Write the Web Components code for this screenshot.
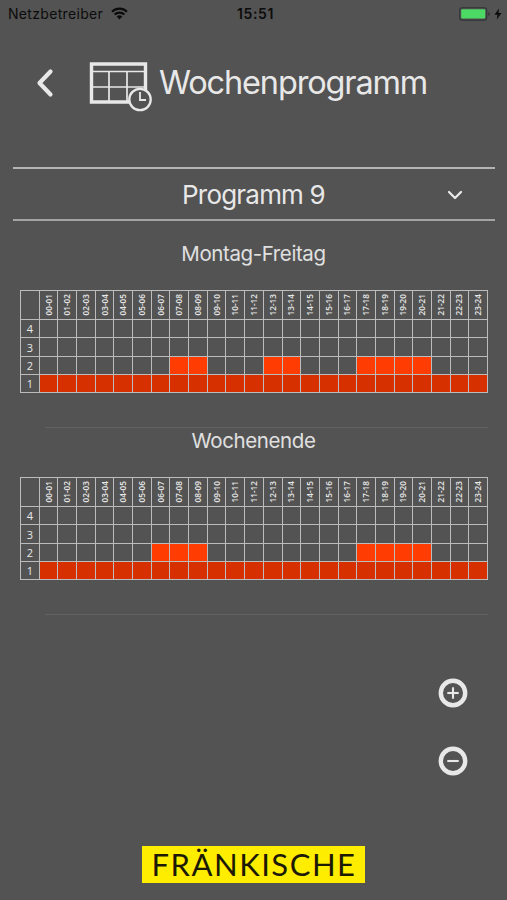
<!DOCTYPE html>
<html lang="de">
<head>
<meta charset="utf-8">
<title>Wochenprogramm</title>
<style>
  body {
    background: #535353;
    color: #e8e8e8;
    font-family: Inter, "Liberation Sans", sans-serif;
    margin: 0;
  }
</style>
</head>
<body>
<week-app></week-app>

<script>
const define = (name, html, setup) => {
  const template = document.createElement('template')
  template.innerHTML = html

  customElements.define(name, class extends HTMLElement {
    constructor() {
      super()
      this.attachShadow({ mode: 'open' }).appendChild(template.content.cloneNode(true))
    }

    connectedCallback() {
      if (setup) setup(this, this.shadowRoot)
    }
  })
}

define('status-bar', `
  <style>
    :host {
      align-items: center;
      box-sizing: border-box;
      color: #0c0c0c;
      display: grid;
      font-size: 14px;
      grid-template-columns: 1fr auto 1fr;
      height: 28px;
      padding: 0 5px 0 8px;
    }

    div {
      align-items: center;
      display: flex;
      margin-top: -1px;
    }

    .carrier {
      gap: 8px;
      letter-spacing: .32px;
    }

    .time {
      font-weight: 600;
      letter-spacing: .6px;
      padding-left: 1px;
    }

    .power {
      gap: 3px;
      justify-content: flex-end;
    }

    svg {
      display: block;
    }
  </style>

  <div class="carrier">
    <span><slot name="carrier"></slot></span>
    <svg width="17" height="13" viewBox="0 0 17 13" fill="none" stroke="#0c0c0c" stroke-width="2.1">
      <path d="M1 4.7a10.7 10.7 0 0 1 15 0M3.6 7.6a7 7 0 0 1 9.8 0" />
      <path d="M8.5 12.5 5.7 9.6a4 4 0 0 1 5.6 0z" fill="#0c0c0c" stroke="none" />
    </svg>
  </div>
  <div class="time"><slot name="time"></slot></div>
  <div class="power">
    <svg width="32" height="14" viewBox="0 0 32 14">
      <rect x=".7" y=".7" width="27" height="12.4" rx="2.4" fill="none" stroke="#303536" stroke-width="1.1" />
      <rect x="2.2" y="2.2" width="24" height="9.4" rx="1" fill="#4cd964" />
      <path d="M29.3 5v4q1.5-.5 1.5-2t-1.5-2" fill="#303536" />
    </svg>
    <svg width="8" height="12" viewBox="0 0 8 12"><path d="M5 .5.5 6.8h3L2.8 11.5 7.5 5h-3z" fill="#0c0c0c" /></svg>
  </div>
`)

define('page-header', `
  <style>
    :host {
      align-items: center;
      display: flex;
      height: 139px;
    }

    .back {
      margin: -29px 0 0 35px;
    }

    .calendar {
      margin: -22px 0 0 34px;
    }

    h1 {
      font-size: 32.5px;
      font-weight: 400;
      letter-spacing: -1.15px;
      line-height: 40px;
      margin: -29px 0 0 6px;
      white-space: nowrap;
    }
  </style>

  <svg class="back" width="20" height="30" viewBox="0 0 20 30">
    <path d="M15.5 3.5 4.5 15l11 11.5" fill="none" stroke="#e8e8e8" stroke-width="4.2" stroke-linecap="round" stroke-linejoin="round" />
  </svg>
  <svg class="calendar" width="64" height="50" viewBox="0 0 64 50" fill="none" stroke="#e8e8e8">
    <path d="M2.5 2h54v38h-54z" stroke-width="3.4" />
    <path d="M3 9.5h53M3 25h53M20 10v30M38 10v30" stroke-width="1.7" />
    <circle cx="51" cy="37.5" r="10.7" fill="#535353" stroke-width="2.3" />
    <path d="M51 30v8h6" stroke-width="1.8" />
  </svg>
  <h1><slot></slot></h1>
`)

define('program-select', `
  <style>
    :host {
      border-bottom: 2px solid #a4a4a4;
      border-top: 2px solid #b4b4b4;
      display: grid;
      grid-template-columns: 1fr auto 1fr;
      align-items: center;
      height: 50px;
      margin: 0 12px 0 13px;
    }

    span {
      font-size: 26px;
      grid-column: 2;
      letter-spacing: -.8px;
      line-height: 32px;
      padding: 2px 1px 0 0;
    }

    svg {
      justify-self: end;
      margin: 1px 31px 0 0;
    }
  </style>

  <span><slot></slot></span>
  <svg width="18" height="12" viewBox="0 0 18 12">
    <path d="M3 3l6 6 6-6" fill="none" stroke="#e8e8e8" stroke-width="2.3" stroke-linecap="round" stroke-linejoin="round" />
  </svg>
`)

// level-2 is a comma separated list of the hours that are raised to level 2
define('day-schedule', `
  <style>
    :host {
      display: block;
      height: 187px;
    }

    h2 {
      color: #e0e0e0;
      font-size: 20.5px;
      font-weight: 400;
      letter-spacing: -.4px;
      line-height: 26px;
      margin: 0;
      text-align: center;
    }

    .grid {
      border-bottom: 1px solid #bcbcbc;
      border-right: 1px solid #bcbcbc;
      box-sizing: border-box;
      display: grid;
      grid-template-columns: repeat(25, 1fr);
      grid-template-rows: 29px 18px 19px 18px 18px;
      height: 103px;
      margin: 23px 19px 34px 20px;
    }

    .grid > div {
      align-items: center;
      border-left: 1px solid #bcbcbc;
      border-top: 1px solid #bcbcbc;
      display: flex;
      font-family: "Open Sans", sans-serif;
      font-size: 11px;
      font-weight: 500;
      justify-content: center;
      min-width: 0;
    }

    .hour span {
      font-size: 8.2px;
      font-weight: 600;
      line-height: 10px;
      transform: rotate(180deg);
      white-space: nowrap;
      writing-mode: vertical-rl;
    }

    .base {
      background: #d73000;
    }

    .high {
      background: #ff3d03;
    }

    hr {
      background: #626262;
      border: 0;
      height: 1px;
      margin: 0 19px 0 45px;
    }
  </style>

  <h2><slot></slot></h2>
  <div class="grid"></div>
  <hr>
`, (host, root) => {
  const grid = root.querySelector('.grid')
  const raised = host.getAttribute('level-2').split(',').map(Number)
  const pad = n => String(n).padStart(2, '0')

  let cells = '<div></div>'
  for (let h = 0; h < 24; h++) {
    cells += `<div class="hour"><span>${pad(h)}-${pad(h + 1)}</span></div>`
  }
  for (let level = 4; level > 0; level--) {
    cells += `<div>${level}</div>`
    for (let h = 0; h < 24; h++) {
      const kind = level === 1 ? 'base' : level === 2 && raised.includes(h) ? 'high' : ''
      cells += `<div class="${kind}"></div>`
    }
  }
  grid.innerHTML = cells
})

define('round-button', `
  <style>
    :host {
      display: block;
      height: 30px;
      width: 30px;
    }

    :host([kind="minus"]) .plus {
      display: none;
    }
  </style>

  <svg width="30" height="30" viewBox="0 0 30 30" fill="none" stroke="#e8e8e8">
    <circle cx="15" cy="15" r="12.2" stroke-width="4.4" />
    <path d="M9.3 15h11.4" stroke-width="2.1" />
    <path class="plus" d="M15 9.3v11.4" stroke-width="2.1" />
  </svg>
`)

define('brand-logo', `
  <style>
    :host {
      align-items: center;
      background: #ffed00;
      box-sizing: border-box;
      color: #1c1a05;
      display: flex;
      font-family: Lato, sans-serif;
      font-size: 31px;
      height: 37px;
      justify-content: center;
      letter-spacing: 1.5px;
      line-height: 37px;
      padding-left: 1px;
      white-space: nowrap;
      width: 223px;
    }
  </style>

  <slot></slot>
`)

define('week-app', `
  <style>
    :host {
      display: flex;
      flex-direction: column;
      height: 900px;
      overflow: hidden;
      width: 507px;
    }

    main {
      padding-top: 20px;
    }

    .actions {
      align-items: flex-end;
      display: flex;
      flex-direction: column;
      gap: 38px;
      margin: 63px 39px 0 0;
    }

    brand-logo {
      margin: auto 0 17px 142px;
    }
  </style>

  <status-bar>
    <span slot="carrier">Netzbetreiber</span>
    <span slot="time">15:51</span>
  </status-bar>
  <page-header>Wochenprogramm</page-header>
  <program-select>Programm 9</program-select>
  <main>
    <day-schedule level-2="7,8,12,13,17,18,19,20">Montag-Freitag</day-schedule>
    <day-schedule level-2="6,7,8,17,18,19,20">Wochenende</day-schedule>
  </main>
  <div class="actions">
    <round-button kind="plus"></round-button>
    <round-button kind="minus"></round-button>
  </div>
  <brand-logo>FRÄNKISCHE</brand-logo>
`)
</script>
</body>
</html>
